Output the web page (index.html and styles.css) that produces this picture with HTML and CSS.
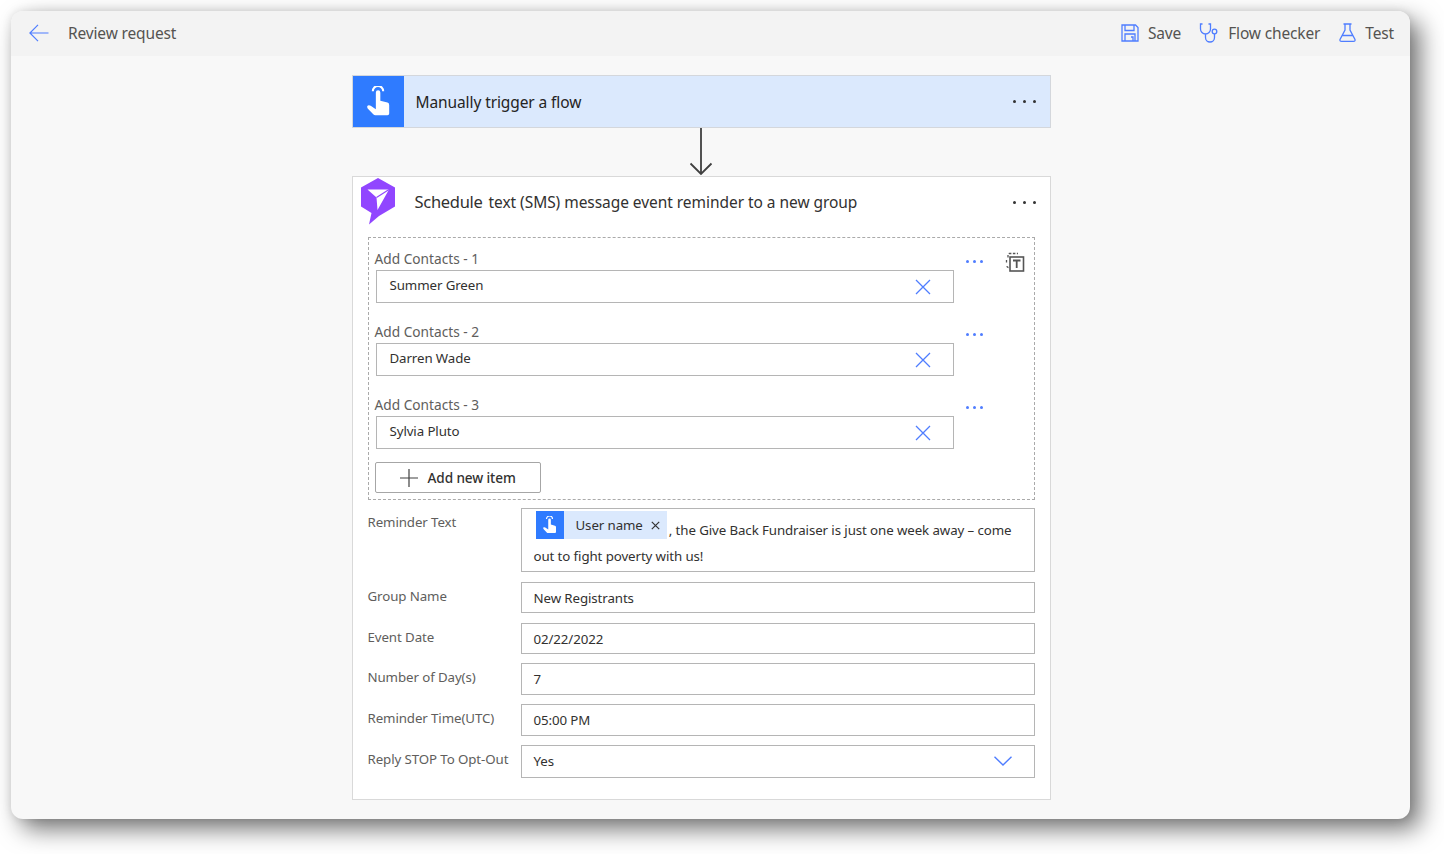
FILE: index.html
```html
<!DOCTYPE html>
<html lang="en">
<head>
    <meta charset="UTF-8">
    <title>Review request</title>
    <link rel="stylesheet" href="styles.css">
</head>
<body>
    <div class="window">
        <div class="top-bar">
            <div class="top-left">
                <svg class="back-icon" width="20" height="18" viewBox="0 0 20 18" fill="none" stroke="#4f7dff" stroke-width="1.2">
                    <path d="M19.5 9H1M9 .8 .9 9 9 17.2"/>
                </svg>
                <span>Review request</span>
            </div>
            <div class="top-right">
                <div class="top-action">
                    <svg width="18" height="18" viewBox="0 0 18 18" fill="none" stroke="#4f7dff" stroke-width="1.3">
                        <path d="M1 1h13.5L17 3.5V17H1zM4 1v5.5h9V1M4 17v-7h10v7M10 13h2v4"/>
                    </svg>
                    <span>Save</span>
                </div>
                <div class="top-action flow-check">
                    <svg width="20" height="20" viewBox="0 0 20 20" fill="none" stroke="#4f7dff" stroke-width="1.3">
                        <path d="M3.5 1H1.5v5a5 5 0 0 0 10 0V1H9.500M6.500 11v3.500a4.500 4.500 0 0 0 9 0V11"/>
                        <circle cx="15.500" cy="8.500" r="2.300"/>
                    </svg>
                    <span>Flow checker</span>
                </div>
                <div class="top-action">
                    <svg width="17" height="19" viewBox="0 0 17 19" fill="none" stroke="#4f7dff" stroke-width="1.3">
                        <path d="M4.500 1h8M6 1v6L1 16.500q-.5 1.800 1.500 1.800h12q2 0 1.500-1.800L11 7V1M3.500 12.500h10"/>
                    </svg>
                    <span>Test</span>
                </div>
            </div>
        </div>

        <div class="canvas">
            <div class="flow">
                <div class="trigger-card">
                    <div class="trigger-icon">
                        <svg width="26" height="31" viewBox="0 0 30 36">
                            <path d="M9 6a6 6 0 0 1 12 0" fill="none" stroke="#fff" stroke-width="2.400"/>
                            <path d="M12.500 7.500a2.600 2.600 0 0 1 5.200 0v9.500l8.300 2.300q2 .6 2 2.700V32q0 2-2 2H12q-1.500 0-2.500-1.200L3 26q-1.500-2 .2-3.300 1.500-1 3.300.3l6 4z" fill="#fff"/>
                        </svg>
                    </div>
                    <div class="trigger-title">Manually trigger a flow</div>
                    <div class="more-dots"><i></i><i></i><i></i></div>
                </div>

                <div class="connector">
                    <svg width="26" height="48" viewBox="0 0 26 48" fill="none" stroke="#404040" stroke-width="1.800">
                        <path d="M13 0v46M2.500 35.500 13 46l10.500-10.500"/>
                    </svg>
                </div>

                <div class="action-card">
                    <div class="action-header">
                        <svg class="action-logo" width="36" height="48" viewBox="0 0 36 48">
                            <path d="M18 1 35 10.500v19L19 39l-10 8.500 2.500-11.500L1 29.500v-19z" fill="#9146ff"/>
                            <path d="M7.500 12.500h21.500L17.500 33l-1-12.500z" fill="#fff"/>
                            <path d="M16.500 20.500 29 12.500" stroke="#9146ff" stroke-width="1.200"/>
                        </svg>
                        <div class="action-title"><span class="title-main">Schedule</span> text (SMS) message event reminder to a new group</div>
                        <div class="more-dots"><i></i><i></i><i></i></div>
                    </div>

                    <div class="contacts-box">
                        <div class="contact-row">
                            <div class="contact-main">
                                <div class="contact-label">Add Contacts - 1</div>
                                <div class="text-field">Summer Green
                                    <svg class="clear-icon" width="16" height="16" viewBox="0 0 16 16" fill="none" stroke="#4f7dff" stroke-width="1.300"><path d="M1 1l14 14M15 1 1 15"/></svg>
                                </div>
                            </div>
                            <div class="more-dots blue"><i></i><i></i><i></i></div>
                            <svg class="delete-icon" width="20" height="20" viewBox="0 0 20 20" fill="none">
                                <path d="M3 5.500V3q0-1.500 1.500-1.500H13M1.500 8v3M2 14q0 1.500 1.500 1.500" stroke="#555" stroke-width="1.300" stroke-dasharray="2.500 1.500"/>
                                <rect x="5" y="5" width="13.500" height="14" fill="#fff" stroke="#555" stroke-width="1.600"/>
                                <path d="M8 8.500h7.500M11.700 8.500V16" stroke="#555" stroke-width="1.800"/>
                            </svg>
                        </div>
                        <div class="contact-row">
                            <div class="contact-main">
                                <div class="contact-label">Add Contacts - 2</div>
                                <div class="text-field">Darren Wade
                                    <svg class="clear-icon" width="16" height="16" viewBox="0 0 16 16" fill="none" stroke="#4f7dff" stroke-width="1.300"><path d="M1 1l14 14M15 1 1 15"/></svg>
                                </div>
                            </div>
                            <div class="more-dots blue"><i></i><i></i><i></i></div>
                        </div>
                        <div class="contact-row">
                            <div class="contact-main">
                                <div class="contact-label">Add Contacts - 3</div>
                                <div class="text-field">Sylvia Pluto
                                    <svg class="clear-icon" width="16" height="16" viewBox="0 0 16 16" fill="none" stroke="#4f7dff" stroke-width="1.300"><path d="M1 1l14 14M15 1 1 15"/></svg>
                                </div>
                            </div>
                            <div class="more-dots blue"><i></i><i></i><i></i></div>
                        </div>
                        <button class="add-button">
                            <svg width="20" height="20" viewBox="0 0 20 20" fill="none" stroke="#404040" stroke-width="1.200"><path d="M10 1v18M1 10h18"/></svg>
                            Add new item
                        </button>
                    </div>

                    <div class="form-rows">
                        <div class="form-row tall">
                            <div class="form-label">Reminder Text</div>
                            <div class="form-value reminder">
                                <span class="token">
                                    <span class="token-icon">
                                        <svg width="15" height="18" viewBox="0 0 30 36">
                                            <path d="M9 6a6 6 0 0 1 12 0" fill="none" stroke="#fff" stroke-width="2.400"/>
                                            <path d="M12.500 7.500a2.600 2.600 0 0 1 5.200 0v9.500l8.300 2.300q2 .6 2 2.700V32q0 2-2 2H12q-1.500 0-2.500-1.200L3 26q-1.500-2 .2-3.300 1.500-1 3.300.3l6 4z" fill="#fff"/>
                                        </svg>
                                    </span>
                                    <span class="token-text">User name</span>
                                    <svg class="token-close" width="9" height="9" viewBox="0 0 9 9" fill="none" stroke="#333" stroke-width="1.200"><path d="M.8.800l7.400 7.400M8.200.800.800 8.200"/></svg>
                                </span><span class="reminder-rest">, the Give Back Fundraiser is just one week away – come</span>
                                <div class="reminder-line">out to fight poverty with us!</div>
                            </div>
                        </div>
                        <div class="form-row short">
                            <div class="form-label">Group Name</div>
                            <div class="form-value">New Registrants</div>
                        </div>
                        <div class="form-row short">
                            <div class="form-label">Event Date</div>
                            <div class="form-value">02/22/2022</div>
                        </div>
                        <div class="form-row">
                            <div class="form-label">Number of Day(s)</div>
                            <div class="form-value">7</div>
                        </div>
                        <div class="form-row">
                            <div class="form-label">Reminder Time(UTC)</div>
                            <div class="form-value">05:00 PM</div>
                        </div>
                        <div class="form-row">
                            <div class="form-label">Reply STOP To Opt-Out</div>
                            <div class="form-value select">Yes
                                <svg width="18" height="10" viewBox="0 0 18 10" fill="none" stroke="#4f7dff" stroke-width="1.400"><path d="M.5.700 9 9 17.500.700"/></svg>
                            </div>
                        </div>
                    </div>
                </div>
            </div>
        </div>
    </div>
</body>
</html>
```

FILE: styles.css
```css
body {
    margin: 0;
    height: 854px;
    background: #fff;
    font-family: "Noto Sans", "Open Sans", sans-serif;
    font-size: 13.300px;
    letter-spacing: -0.1px;
    color: #323130;
    overflow: hidden;
}

.window {
    width: 1399px;
    height: 808px;
    margin: 11px 0 0 11px;
    background: #f8f8f8;
    border-radius: 12px;
    box-shadow: 10px 10px 24px rgba(0, 0, 0, 0.55), 0 0 10px rgba(0, 0, 0, 0.1);
}

.top-bar {
    height: 45px;
    background: #f3f3f3;
    border-radius: 12px 12px 0 0;
    display: flex;
    justify-content: space-between;
    align-items: center;
    padding: 0 16px 2px 18px;
    box-sizing: border-box;
    font-size: 15.500px;
    letter-spacing: -0.15px;
    color: #555351;
}

.top-left {
    display: flex;
    align-items: center;
    gap: 19px;
}

.top-right {
    display: flex;
    align-items: center;
    gap: 19px;
}

.top-action {
    display: flex;
    align-items: center;
    gap: 9px;
}

.flow-check {
    margin-left: -1px;
}

.canvas {
    display: flex;
    justify-content: center;
    padding-top: 19px;
    padding-right: 19px;
}

.flow {
    width: 699px;
}

.trigger-card {
    height: 53px;
    box-sizing: border-box;
    background: #dbe9fd;
    border: 1px solid #d4d7dc;
    display: flex;
    align-items: center;
    padding-right: 14px;
}

.trigger-icon {
    width: 51px;
    height: 51px;
    background: #2f7bff;
    display: flex;
    justify-content: center;
    align-items: center;
}

.trigger-title {
    flex: 1;
    margin-left: 12px;
    font-size: 15.500px;
    letter-spacing: -0.1px;
    color: #252423;
}

.more-dots {
    display: flex;
    gap: 7px;
}

.more-dots i {
    width: 3px;
    height: 3px;
    border-radius: 50%;
    background: #333;
}

.more-dots.blue {
    margin: 11px 0 0 12px;
    gap: 4px;
    height: 3px;
}

.more-dots.blue i {
    background: #4f7dff;
}

.connector {
    height: 48px;
    display: flex;
    justify-content: center;
}

.action-card {
    height: 624px;
    box-sizing: border-box;
    background: #fff;
    border: 1px solid #d9d9d9;
    padding: 0 15px 0 15px;
}

.action-header {
    height: 60px;
    display: flex;
    align-items: center;
    margin-right: -1px;
}

.action-logo {
    flex: none;
    margin: -13px 0 0 -8px;
}

.action-title {
    flex: 1;
    margin-left: 19px;
    font-size: 15.500px;
    letter-spacing: -0.05px;
    color: #323130;
    padding-bottom: 11px;
}

.title-main {
    font-size: 16.500px;
    letter-spacing: -0.3px;
    margin-right: 2px;
}

.action-header .more-dots {
    margin: 0 0 9px 0;
}

.contacts-box {
    height: 263px;
    box-sizing: border-box;
    border: 1px dashed #aaa;
    padding: 11px 0 0 6px;
}

.contact-row {
    display: flex;
    height: 73px;
}

.contact-main {
    width: 579px;
}

.contact-label {
    height: 21px;
    line-height: 20px;
    color: #605e5c;
    font-size: 13.700px;
    letter-spacing: 0;
}

.text-field {
    margin-left: 1px;
    height: 33px;
    box-sizing: border-box;
    border: 1px solid #b5b5b5;
    padding: 0 22px 3px 13px;
    display: flex;
    align-items: center;
    justify-content: space-between;
}

.clear-icon {
    margin-top: 3px;
}

.delete-icon {
    margin: 3px 0 0 22px;
}

.add-button {
    display: flex;
    align-items: center;
    gap: 9px;
    width: 166px;
    height: 31px;
    margin-top: -6px;
    padding: 0 0 0 23px;
    background: #fff;
    border: 1px solid #a6a6a6;
    border-radius: 2px;
    font-family: inherit;
    font-size: 13.600px;
    letter-spacing: -0.1px;
    font-weight: 500;
    color: #323130;
}

.form-rows {
    margin-top: 8px;
}

.form-row {
    display: flex;
    margin-bottom: 9px;
}

.form-row.tall,
.form-row.short {
    margin-bottom: 10px;
}

.form-row.short + .form-row:not(.short) {
    margin-top: -1px;
}

.form-label {
    width: 153px;
    flex: none;
    padding-top: 5px;
    color: #605e5c;
    white-space: nowrap;
}

.form-value {
    flex: 1;
    height: 32px;
    box-sizing: border-box;
    border: 1px solid #b5b5b5;
    padding: 0 12px;
    display: flex;
    align-items: center;
}

.form-row.short .form-value {
    height: 31px;
}

.form-value.reminder {
    display: block;
    height: 64px;
    padding: 2px 12px 0 12px;
    white-space: nowrap;
}

.token {
    display: inline-flex;
    align-items: center;
    height: 28px;
    margin-left: 2px;
    background: #dbe9fd;
    vertical-align: top;
}

.token-icon {
    width: 28px;
    height: 28px;
    background: #2f7bff;
    display: flex;
    justify-content: center;
    align-items: center;
}

.token-text {
    margin: 0 8px 0 12px;
}

.token-close {
    margin-right: 7px;
}

.reminder-rest {
    display: inline-block;
    margin-top: 10px;
    margin-left: 2px;
}

.reminder-line {
    margin-top: 8px;
}

.form-value.select {
    height: 33px;
    justify-content: space-between;
    padding-right: 22px;
    padding-bottom: 1px;
}
```
